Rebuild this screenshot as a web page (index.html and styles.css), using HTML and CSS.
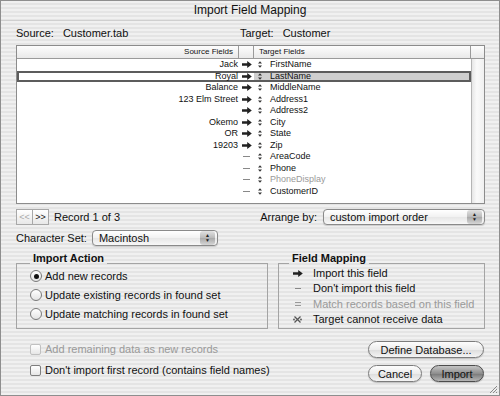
FILE: index.html
```html
<!DOCTYPE html>
<html>
<head>
    <title>Import Field Mapping</title>
    <link rel="stylesheet" href="styles.css">
</head>
<body>
    <svg class="defs" width="0" height="0">
        <symbol id="arrow" viewBox="0 0 10 7">
            <path d="M0 2.3h5.2V0l4.6 3.5-4.6 3.5V4.7H0z"/>
        </symbol>
        <symbol id="handle" viewBox="0 0 5 8">
            <path d="M2.5 0 5 2.8H0z M0 5.2h5L2.5 8z"/>
        </symbol>
        <symbol id="nope" viewBox="0 0 9 9">
            <path d="M1.5 1.5l6 6M7.5 1.5l-6 6" stroke="currentColor" stroke-width="1.3" fill="none"/>
            <circle cx="1" cy="4.5" r="0.9"/><circle cx="8" cy="4.5" r="0.9"/>
        </symbol>
    </svg>

    <div class="window">
        <div class="titlebar">Import Field Mapping</div>

        <div class="sheet">
            <div class="files">
                <div class="file file-src"><span class="file-label">Source:</span>Customer.tab</div>
                <div class="file"><span class="file-label">Target:</span>Customer</div>
            </div>

            <div class="list">
                <div class="list-head">
                    <div class="head-cell head-src">Source Fields</div>
                    <div class="head-cell"></div>
                    <div class="head-cell head-tgt">Target Fields</div>
                    <div class="head-corner"></div>
                </div>
                <div class="list-body">
                    <div class="rows">
                        <div class="row"><span class="src">Jack</span><span class="mid"><svg class="ico-arrow"><use href="#arrow"/></svg></span><span class="tgt"><svg class="ico-handle"><use href="#handle"/></svg>FirstName</span></div>
                        <div class="row selected"><span class="src">Royal</span><span class="mid"><svg class="ico-arrow"><use href="#arrow"/></svg></span><span class="tgt"><svg class="ico-handle"><use href="#handle"/></svg>LastName</span></div>
                        <div class="row"><span class="src">Balance</span><span class="mid"><svg class="ico-arrow"><use href="#arrow"/></svg></span><span class="tgt"><svg class="ico-handle"><use href="#handle"/></svg>MiddleName</span></div>
                        <div class="row"><span class="src">123 Elm Street</span><span class="mid"><svg class="ico-arrow"><use href="#arrow"/></svg></span><span class="tgt"><svg class="ico-handle"><use href="#handle"/></svg>Address1</span></div>
                        <div class="row"><span class="src"></span><span class="mid"><svg class="ico-arrow"><use href="#arrow"/></svg></span><span class="tgt"><svg class="ico-handle"><use href="#handle"/></svg>Address2</span></div>
                        <div class="row"><span class="src">Okemo</span><span class="mid"><svg class="ico-arrow"><use href="#arrow"/></svg></span><span class="tgt"><svg class="ico-handle"><use href="#handle"/></svg>City</span></div>
                        <div class="row"><span class="src">OR</span><span class="mid"><svg class="ico-arrow"><use href="#arrow"/></svg></span><span class="tgt"><svg class="ico-handle"><use href="#handle"/></svg>State</span></div>
                        <div class="row"><span class="src">19203</span><span class="mid"><svg class="ico-arrow"><use href="#arrow"/></svg></span><span class="tgt"><svg class="ico-handle"><use href="#handle"/></svg>Zip</span></div>
                        <div class="row"><span class="src"></span><span class="mid"><i class="dash"></i></span><span class="tgt"><svg class="ico-handle"><use href="#handle"/></svg>AreaCode</span></div>
                        <div class="row"><span class="src"></span><span class="mid"><i class="dash"></i></span><span class="tgt"><svg class="ico-handle"><use href="#handle"/></svg>Phone</span></div>
                        <div class="row"><span class="src"></span><span class="mid"><i class="dash"></i></span><span class="tgt muted"><svg class="ico-handle"><use href="#handle"/></svg>PhoneDisplay</span></div>
                        <div class="row"><span class="src"></span><span class="mid"><i class="dash"></i></span><span class="tgt"><svg class="ico-handle"><use href="#handle"/></svg>CustomerID</span></div>
                    </div>
                    <div class="scroll"></div>
                </div>
            </div>

            <div class="nav-row">
                <div class="pager">
                    <span class="page-btn disabled">&lt;&lt;</span><span class="page-btn">&gt;&gt;</span>
                    <span class="record">Record 1 of 3</span>
                </div>
                <div class="arrange">
                    <span class="arrange-label">Arrange by:</span>
                    <div class="popup popup-wide"><span>custom import order</span><span class="stepper">&#9650;<br>&#9660;</span></div>
                </div>
            </div>

            <div class="charset-row">
                <span>Character Set:</span>
                <div class="popup popup-charset"><span>Macintosh</span><span class="stepper">&#9650;<br>&#9660;</span></div>
            </div>

            <div class="groups">
                <fieldset class="group group-action">
                    <legend>Import Action</legend>
                    <div class="radios">
                        <label class="radio-row"><span class="radio on"></span>Add new records</label>
                        <label class="radio-row"><span class="radio"></span>Update existing records in found set</label>
                        <label class="radio-row"><span class="radio"></span>Update matching records in found set</label>
                    </div>
                </fieldset>
                <fieldset class="group group-legend">
                    <legend>Field Mapping</legend>
                    <div class="legend-items">
                        <div class="legend-row"><span class="legend-ico"><svg class="ico-arrow big"><use href="#arrow"/></svg></span>Import this field</div>
                        <div class="legend-row"><span class="legend-ico"><i class="dash"></i></span>Don't import this field</div>
                        <div class="legend-row muted"><span class="legend-ico"><i class="equals"></i></span>Match records based on this field</div>
                        <div class="legend-row"><span class="legend-ico"><svg class="ico-nope"><use href="#nope"/></svg></span>Target cannot receive data</div>
                    </div>
                </fieldset>
            </div>

            <div class="footer">
                <div class="checks">
                    <label class="check-row muted"><span class="check disabled"></span>Add remaining data as new records</label>
                    <label class="check-row"><span class="check"></span>Don't import first record (contains field names)</label>
                </div>
                <div class="actions">
                    <button class="btn btn-full">Define Database...</button>
                    <div class="btn-pair">
                        <button class="btn">Cancel</button>
                        <button class="btn btn-default">Import</button>
                    </div>
                </div>
            </div>
        </div>

        <svg class="grip" width="10" height="10" viewBox="0 0 10 10">
            <path d="M9 2 2 9M9 5 5 9M9 8 8 9" stroke="#8a8a8a" stroke-width="1"/>
        </svg>
    </div>
</body>
</html>
```
FILE: styles.css
```css
* {
    box-sizing: border-box;
}
body {
    margin: 0;
    font-family: "Liberation Sans", Arial, sans-serif;
    font-size: 11px;
    color: #111;
}
.defs {
    position: absolute;
}
.window {
    position: relative;
    width: 500px;
    height: 396px;
    border: 1px solid #8e8e8e;
    background: repeating-linear-gradient(to bottom, #f0f0f0 0, #f0f0f0 2px, #e4e4e4 2px, #e4e4e4 4px);
}
.titlebar {
    height: 20px;
    line-height: 19px;
    text-align: center;
    font-size: 12px;
    border-bottom: 1px solid #cfcfcf;
}
.sheet {
    padding: 0 14px 0 15px;
}

/* source / target line */
.files {
    display: flex;
    height: 14px;
    line-height: 14px;
    margin-top: 5px;
}
.file-src {
    width: 224px;
}
.file-label {
    margin-right: 9px;
}

/* field list */
.list {
    margin-top: 5px;
    border: 1px solid #8c8c8c;
    background: #fff;
}
.list-head {
    display: grid;
    grid-template-columns: 222px 15px 1fr 13px;
    height: 13px;
    border-bottom: 1px solid #9a9a9a;
    background: linear-gradient(#fdfdfd, #e9e9e9);
    font-size: 8px;
    line-height: 12px;
}
.head-cell {
    border-right: 1px solid #9a9a9a;
}
.head-src {
    text-align: right;
    padding-right: 5px;
}
.head-tgt {
    padding-left: 5px;
}
.list-body {
    display: flex;
    height: 144px;
}
.rows {
    flex: 1;
}
.row {
    display: grid;
    grid-template-columns: 222px 15px 1fr;
    height: 11.5px;
    line-height: 11.5px;
    font-size: 9px;
}
.src {
    text-align: right;
    padding-right: 1px;
}
.mid {
    display: flex;
    align-items: center;
    justify-content: center;
}
.tgt {
    display: flex;
    align-items: center;
    padding-left: 4px;
}
.row.selected {
    box-shadow: inset 0 0 0 2px #5c5c5c;
}
.row.selected .tgt {
    background: #cfcfcf;
    margin: 2px 2px 2px 0;
    padding-left: 4px;
    line-height: 7.5px;
}
.ico-arrow {
    width: 10px;
    height: 7px;
    fill: #222;
}
.ico-handle {
    width: 4px;
    height: 7px;
    fill: #333;
    margin-right: 8px;
}
.dash {
    display: block;
    width: 7px;
    height: 1px;
    background: #888;
}
.muted {
    color: #9a9a9a;
}
.scroll {
    width: 13px;
    border-left: 1px solid #b5b5b5;
    background: linear-gradient(to right, #e6e6e6, #fafafa 40%, #f0f0f0);
}

/* pager + arrange */
.nav-row {
    display: flex;
    justify-content: space-between;
    align-items: center;
    height: 18px;
    margin-top: 4px;
}
.pager {
    display: flex;
    align-items: center;
}
.page-btn {
    width: 17px;
    height: 16px;
    border: 1px solid #a8a8a8;
    margin-right: -1px;
    background: linear-gradient(#fff, #e8e8e8);
    font-size: 9px;
    line-height: 14px;
    text-align: center;
}
.page-btn.disabled {
    color: #aaa;
}
.record {
    margin-left: 6px;
}
.arrange {
    display: flex;
    align-items: center;
}
.arrange-label {
    margin-right: 6px;
}
.popup {
    display: flex;
    justify-content: space-between;
    align-items: center;
    height: 16px;
    padding-left: 6px;
    border: 1px solid #8a8a8a;
    border-radius: 4px;
    background: linear-gradient(#ffffff, #f1f1f1 50%, #e6e6e6 51%, #f8f8f8);
    box-shadow: 0 1px 1px rgba(0, 0, 0, 0.15);
}
.popup-wide {
    width: 162px;
}
.stepper {
    width: 15px;
    height: 14px;
    margin-right: 2px;
    border-radius: 3px;
    background: linear-gradient(#e2e2e2, #b9b9b9 50%, #a8a8a8 51%, #d6d6d6);
    font-size: 5px;
    line-height: 5px;
    text-align: center;
    padding-top: 2px;
    color: #222;
}

/* character set */
.charset-row {
    display: flex;
    align-items: center;
    height: 18px;
    margin-top: 3px;
}
.popup-charset {
    width: 126px;
    margin-left: 5px;
}

/* group boxes */
.groups {
    display: flex;
    gap: 10px;
    margin-top: 5px;
}
.group {
    margin: 0;
    border: 1px solid #a4a4a4;
    padding: 0 0 0 13px;
    min-width: 0;
}
.group legend {
    font-weight: bold;
    line-height: 12px;
    padding: 0 3px 10px;
}
.group-action {
    width: 252px;
    height: 77px;
}
.group-legend {
    flex: 1;
    height: 77px;
    padding-left: 10px;
}
.radios {
    margin-top: -7.5px;
}
.radio-row {
    display: flex;
    align-items: center;
    height: 19px;
}
.radio {
    width: 12px;
    height: 12px;
    margin-right: 3px;
    border: 1px solid #7a7a7a;
    border-radius: 50%;
    background: linear-gradient(#fff, #e4e4e4);
    display: flex;
    align-items: center;
    justify-content: center;
}
.radio.on::after {
    content: "";
    width: 5px;
    height: 5px;
    border-radius: 50%;
    background: #111;
}
.legend-items {
    margin-top: -8.5px;
    margin-left: 4px;
}
.legend-row {
    display: flex;
    align-items: center;
    height: 15.3px;
}
.legend-ico {
    width: 20px;
    display: flex;
    align-items: center;
}
.legend-ico .dash {
    width: 6px;
    margin-left: 2px;
}
.equals {
    display: block;
    width: 6px;
    height: 4px;
    margin-left: 2px;
    border-top: 1.5px solid #999;
    border-bottom: 1.5px solid #999;
}
.ico-arrow.big {
    width: 10px;
    height: 7px;
}
.ico-nope {
    width: 9px;
    height: 9px;
    fill: #555;
    color: #555;
}

/* footer */
.footer {
    display: flex;
    justify-content: space-between;
    margin-top: 12px;
}
.checks {
    padding-left: 14px;
    padding-top: 0;
}
.check-row {
    display: flex;
    align-items: center;
    height: 16px;
    margin-bottom: 5px;
}
.check {
    width: 11px;
    height: 11px;
    margin-right: 4px;
    border: 1px solid #7e7e7e;
    border-radius: 2px;
    background: linear-gradient(#fff, #e6e6e6);
}
.check.disabled {
    border-color: #c0c0c0;
}
.actions {
    width: 116px;
    display: flex;
    flex-direction: column;
    gap: 7px;
    margin-right: 1px;
}
.btn {
    height: 17px;
    padding: 0;
    border: 1px solid #7c7c7c;
    border-radius: 9px;
    background: linear-gradient(#fdfdfd, #ececec 50%, #dcdcdc 51%, #f4f4f4);
    font-family: inherit;
    font-size: 11px;
    color: #111;
    box-shadow: 0 1px 1px rgba(0, 0, 0, 0.2);
}
.btn-pair {
    display: flex;
    gap: 8px;
}
.btn-pair .btn {
    flex: 1;
}
.btn-default {
    border-color: #4c4c4c;
    background: linear-gradient(#c4c4c4, #8e8e8e 50%, #777 51%, #b6b6b6);
}
.grip {
    position: absolute;
    right: 1px;
    bottom: 1px;
}
```
